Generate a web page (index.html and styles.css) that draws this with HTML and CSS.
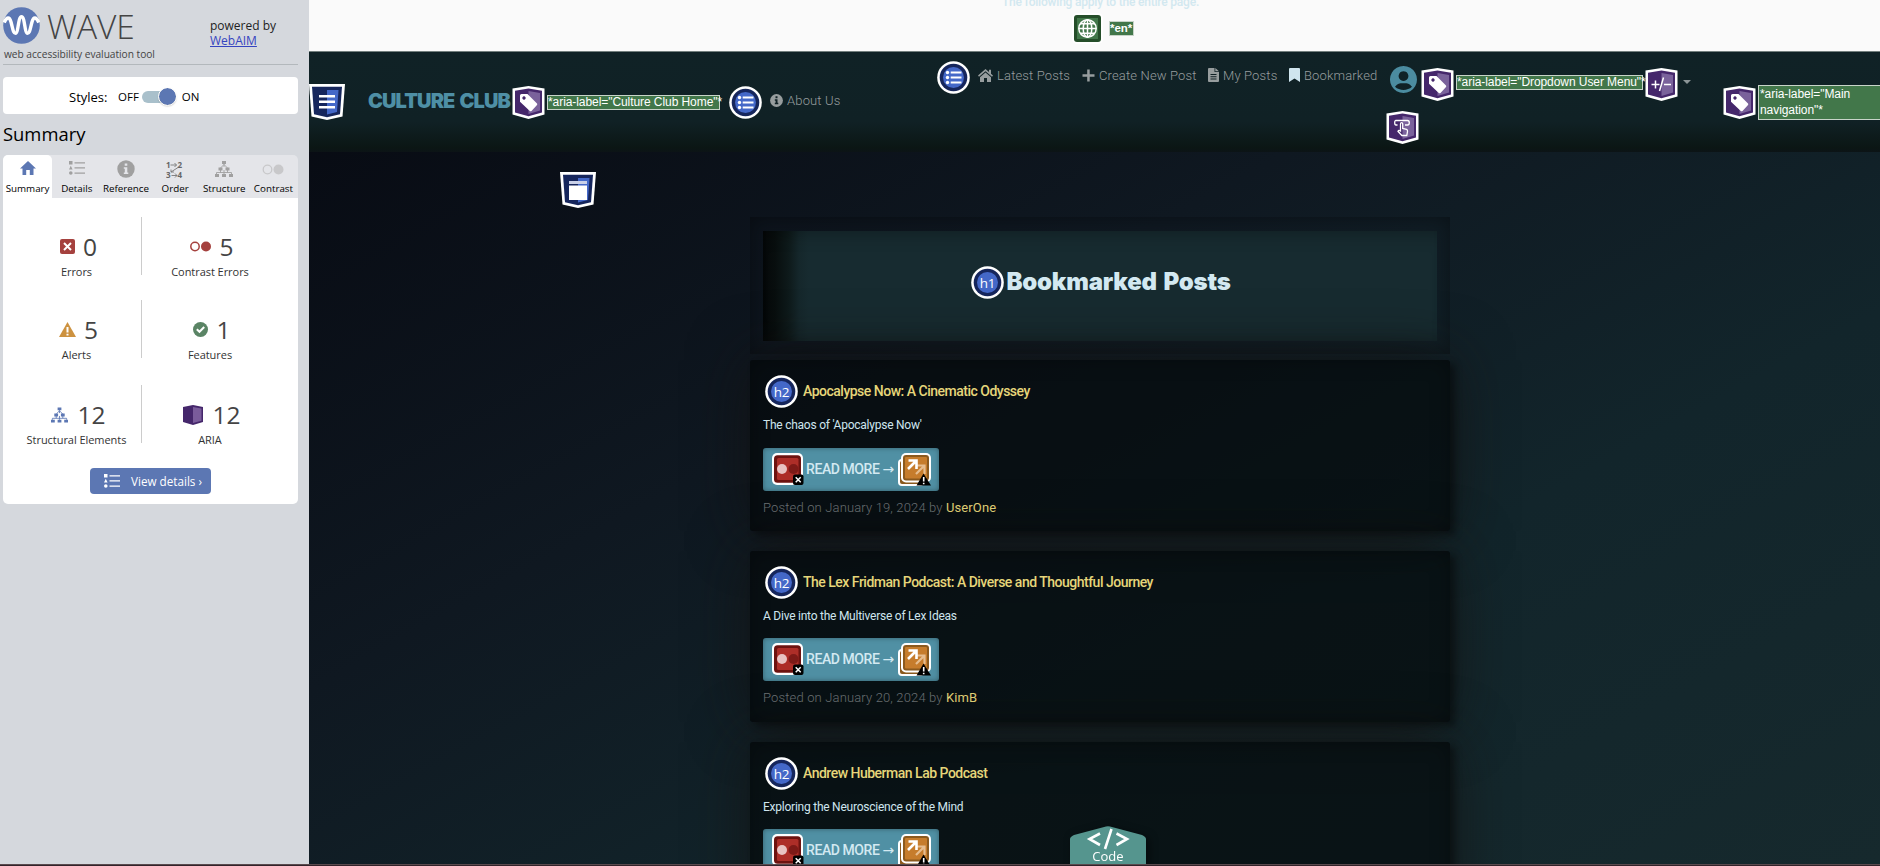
FILE: index.html
```html
<!DOCTYPE html>
<html lang="en">
<head>
<meta charset="utf-8">
<title>Culture Club - WAVE report</title>
<link rel="stylesheet" href="styles.css">
</head>
<body>
<svg class="defs" width="0" height="0" aria-hidden="true">
  <symbol id="hex" viewBox="0 0 33 33">
    <path d="M16.500 0 32.500 2.500V28.500L16.500 33 .5 28.500V2.500Z" fill="#fff"/>
    <path d="M16.500 2.500 30 4.700V26.500L16.500 30.300 3 26.500V4.700Z" fill="#45276b"/>
    <path d="M16.500 5 28 7V24.500L16.500 28Z" fill="#7a629b"/>
  </symbol>
  <symbol id="shield" viewBox="0 0 36 36">
    <path d="M0 0H36L33.500 32.500 18 36 2.500 32.500Z" fill="#fff"/>
    <path d="M3 2.700H33L31 30.300 18 33.300 5 30.300Z" fill="#16265c"/>
    <path d="M18 6H29.500L28 28 18 30.500Z" fill="#4468c8"/>
  </symbol>
  <symbol id="disc" viewBox="0 0 33 33">
    <circle cx="16.500" cy="16.500" r="16.300" fill="#fff"/>
    <circle cx="16.500" cy="16.500" r="13.800" fill="#16265c"/>
    <circle cx="16.500" cy="16.500" r="10.500" fill="#4468c8"/>
  </symbol>
  <symbol id="tag" viewBox="0 0 33 33">
    <use href="#hex"/>
    <path fill="#fff" fill-rule="evenodd" d="M8 9.500Q8 8 9.500 8H15.500L25 17.500Q25.600 18.300 25 19L19.500 25Q18.500 25.600 17.800 25L8 15.800ZM12 10.300a1.700 1.700 0 1 0 .01 0Z"/>
  </symbol>
  <symbol id="list" viewBox="0 0 33 33">
    <use href="#disc"/>
    <g fill="#fff"><circle cx="10.500" cy="11.500" r="1.700"/><circle cx="10.500" cy="16.500" r="1.700"/><circle cx="10.500" cy="21.500" r="1.700"/><path d="M13.700 10.400H24.500V12.500H13.700ZM13.700 15.400H24.500V17.500H13.700ZM13.700 20.400H24.500V22.500H13.700Z"/></g>
  </symbol>
  <symbol id="tree" viewBox="0 0 18 16">
    <path d="M9 3V6M5.500 7 9 3.500 12.500 7M5.500 9V11.500M12.500 9V11.500M1.500 13V11.500H16.500V13M9 9V13" fill="none" stroke="currentColor" stroke-width=".9"/>
    <path fill="currentColor" d="M7 0H11V3H7ZM3.500 6.500H7.500V9.500H3.500ZM10.500 6.500H14.500V9.500H10.500ZM0 13H4V16H0ZM7 13H11V16H7ZM14 13H18V16H14Z"/>
  </symbol>
  <symbol id="rows" viewBox="0 0 16 14">
    <path fill="currentColor" d="M0 0H3.500V3.500H0ZM5.500 1.200H16V2.400H5.500ZM1.800 4.800 3.600 8.500H0ZM5.500 6.300H16V7.500H5.500ZM5.500 11.600H16V12.800H5.500Z"/><circle cx="1.800" cy="12" r="1.800" fill="currentColor"/>
  </symbol>
  <symbol id="contrast-error" viewBox="0 0 32 33">
    <rect width="31" height="32" rx="5" fill="#fff"/><rect x="2" y="2.200" width="27" height="27.500" rx="3.500" fill="#6d1310"/>
    <rect x="5" y="5" width="21.500" height="22" rx="1.500" fill="#ad2e28"/>
    <circle cx="10" cy="16" r="5" fill="#e8c3c2"/><circle cx="21.500" cy="16" r="5" fill="#7d1a17"/>
    <rect x="21" y="21.500" width="10.500" height="10.500" rx="2" fill="#000"/><path d="M23.700 24.200 28.700 29.200M28.700 24.200 23.700 29.200" stroke="#fff" stroke-width="1.500"/>
  </symbol>
  <symbol id="redundant" viewBox="0 0 33 33">
    <rect x="0" y="6" width="26" height="27" rx="4" fill="#fff"/><rect x="2" y="8" width="23" height="23" rx="2" fill="#8c5a1e"/>
    <rect x="3" y="0" width="30" height="29.500" rx="5" fill="#fff"/><rect x="5" y="2" width="26" height="25.500" rx="3" fill="#8c5a1e"/>
    <rect x="7" y="4" width="22" height="21.500" rx="1" fill="#c67c2c"/>
    <path d="M18 21 26 13M18.500 12.500H26.500V21" fill="none" stroke="#e6bd90" stroke-width="2.200"/>
    <path d="M10 16 18 8M10.500 7.500H18.500V16" fill="none" stroke="#fff" stroke-width="2.600"/>
    <path d="M25.500 20.500 33 32.500H18.500Z" fill="#000"/><path d="M25.700 24V28.500M25.700 29.700V31.200" stroke="#fff" stroke-width="1.600"/>
  </symbol>
</svg>

<div class="app">
  <aside class="sidebar">
    <header class="brand">
      <div class="brand-logo">
        <div class="brand-line">
          <svg width="37" height="37" viewBox="0 0 37 37"><circle cx="18.500" cy="18.500" r="18.300" fill="#5c77b3"/><path d="M1.200 15.500C4 9.500 6.500 9.500 8 15C10 22.500 10.200 26.300 12.500 26.300C15.500 26.300 15 9.800 18.500 9.800C22 9.800 21.500 26.300 24.500 26.300C26.800 26.300 27 22.500 29 15C30.500 9.500 33 9.500 35.800 15.500" fill="none" stroke="#fff" stroke-width="3.400"/></svg>
          <span class="wordmark">WAVE</span>
        </div>
        <div class="tagline">web accessibility evaluation tool</div>
      </div>
      <div class="powered">powered by<br><a href="#">WebAIM</a></div>
    </header>
    <div class="styles-box"><span class="styles-label">Styles:</span><span>OFF</span><span class="toggle"><i></i></span><span>ON</span></div>
    <h2 class="side-title">Summary</h2>
    <nav class="tabs">
      <div class="tab active"><svg width="16" height="14" viewBox="0 0 16 14"><path fill="#5c77b3" d="M8 0 16 7.500H13.500V14H9.800V9H6.200V14H2.500V7.500H0Z"/></svg><span>Summary</span></div>
      <div class="tab"><svg width="16" height="14"><use href="#rows"/></svg><span>Details</span></div>
      <div class="tab"><svg width="18" height="18" viewBox="0 0 18 18"><circle cx="9" cy="9" r="8.700" fill="#a0a0a0"/><path fill="#e4e5e9" d="M7.700 3.500H10.300V5.800H7.700ZM6.800 7.300H10.300V12.500H11.300V14H6.800V12.500H7.800V8.700H6.800Z"/></svg><span>Reference</span></div>
      <div class="tab"><svg class="order" width="18" height="18" viewBox="0 0 18 18"><text x="0" y="7">1</text><text x="11.500" y="7">2</text><text x="0" y="17">3</text><text x="11.500" y="17">4</text><path d="M4.500 4H10.500M8.500 2 10.500 4 8.500 6M12 6.500 5 11M5 8.500V11H8M5.500 14.500H11M9 12.500 11 14.500 9 16.500" fill="none" stroke="#777" stroke-width=".9"/></svg><span>Order</span></div>
      <div class="tab"><svg width="18" height="16"><use href="#tree"/></svg><span>Structure</span></div>
      <div class="tab"><svg width="22" height="11" viewBox="0 0 22 11"><circle cx="5.500" cy="5.500" r="4.300" fill="none" stroke="#c8c8ca" stroke-width="1.300"/><circle cx="16.500" cy="5.500" r="5" fill="#c8c8ca"/></svg><span>Contrast</span></div>
    </nav>
    <section class="report">
      <div class="stats">
        <div class="stat"><div class="num"><svg width="15" height="15" viewBox="0 0 15 15"><rect width="15" height="15" rx="2" fill="#a5413e"/><path d="M4 4 11 11M11 4 4 11" stroke="#fff" stroke-width="2"/></svg><b>0</b></div><span>Errors</span></div>
        <div class="stat"><div class="num"><svg width="21" height="15" viewBox="0 0 21 15"><circle cx="5" cy="7.500" r="4.200" fill="none" stroke="#a5413e" stroke-width="1.500"/><circle cx="16" cy="7.500" r="5" fill="#a5413e"/></svg><b>5</b></div><span>Contrast Errors</span></div>
        <div class="stat"><div class="num"><svg width="17" height="15" viewBox="0 0 17 15"><path d="M8.500 0 17 15H0Z" fill="#cd9240"/><path d="M8.500 5V10.500M8.500 11.700V13.500" stroke="#fff" stroke-width="2"/></svg><b>5</b></div><span>Alerts</span></div>
        <div class="stat"><div class="num"><svg width="15" height="15" viewBox="0 0 15 15"><circle cx="7.500" cy="7.500" r="7.500" fill="#5a8465"/><path d="M3.800 7.200 6.500 9.800 11.200 5" fill="none" stroke="#fff" stroke-width="2"/></svg><b>1</b></div><span>Features</span></div>
        <div class="stat"><div class="num blue"><svg width="17" height="16"><use href="#tree"/></svg><b>12</b></div><span>Structural Elements</span></div>
        <div class="stat"><div class="num"><svg width="20" height="20" viewBox="0 0 20 20"><path d="M10 0 20 2V17L10 20 0 17V2Z" fill="#45276b"/><path d="M10 2 18.500 3.500V15.800L10 18Z" fill="#7a5c9b"/></svg><b>12</b></div><span>ARIA</span></div>
      </div>
      <button class="details"><svg width="16" height="14"><use href="#rows"/></svg><span>View details ›</span></button>
    </section>
  </aside>

  <div class="page">
    <div class="pagewide">
      <div class="notice">The following apply to the entire page.</div>
      <div class="lang"><svg width="31" height="31" viewBox="0 0 31 31"><rect width="31" height="31" rx="5" fill="#fff"/><rect x="2" y="2" width="27" height="27" rx="3" fill="#254e2a"/><rect x="5" y="5" width="21" height="21" fill="#42774a"/><g fill="none" stroke="#fff" stroke-width="1.500"><circle cx="15.500" cy="15.500" r="8.700"/><ellipse cx="15.500" cy="15.500" rx="4.300" ry="8.700"/><path d="M15.500 6.500V24.500M6.800 15.500H24.200M8.300 10.800H22.700M8.300 20.200H22.700"/></g></svg><span class="note">*en*</span></div>
    </div>

    <header class="navbar">
      <svg class="nav-mark" width="36" height="36" viewBox="0 0 36 36"><use href="#shield"/><path fill="#fff" d="M10 11H26V13.500H10ZM10 16.500H26V19H10ZM10 22H26V24.500H10Z"/></svg>
      <div class="logo">CULTURE CLUB</div>
      <svg class="logo-tag" width="33" height="33"><use href="#tag"/></svg>
      <span class="note home-note">*aria-label="Culture Club Home"*</span>
      <svg class="about-list" width="33" height="33"><use href="#list"/></svg>
      <a class="link about"><svg width="13" height="13" viewBox="0 0 13 13"><circle cx="6.500" cy="6.500" r="6.400" fill="currentColor"/><path fill="#102125" d="M5.500 2.300H7.500V4.300H5.500ZM4.800 5.300H7.500V8.800H8.300V10.300H4.800V8.800H5.600V6.700H4.800Z"/></svg>About Us</a>
      <div class="menu">
        <div class="menu-row">
          <svg class="menu-list" width="33" height="33"><use href="#list"/></svg>
          <a class="link l1"><svg width="15" height="13" viewBox="0 0 15 13"><path fill="currentColor" d="M7.500 0 15 6.500 14 7.700 7.500 2.200 1 7.700 0 6.500 2 4.800ZM11 .8H13V5L11 3.300ZM7.500 3.500 13 8.200V13H9V9H6V13H2V8.200Z"/></svg>Latest Posts</a>
          <a class="link l2"><svg width="13" height="13" viewBox="0 0 13 13"><path fill="currentColor" d="M5.200 .5H7.700V5.200H12.500V7.700H7.700V12.500H5.200V7.700H.5V5.200H5.200Z"/></svg>Create New Post</a>
          <a class="link l3"><svg width="11" height="14" viewBox="0 0 11 14"><path fill="currentColor" fill-rule="evenodd" d="M0 1Q0 0 1 0H6.500V4H11V13Q11 14 10 14H1Q0 14 0 13ZM7.300 0 11 3.300H7.300ZM2.500 6V7H8.500V6ZM2.500 8.200V9.200H8.500V8.200ZM2.500 10.500V11.500H8.500V10.500Z"/></svg>My Posts</a>
          <a class="link l4"><svg width="11" height="14" viewBox="0 0 11 14"><path fill="#cfe5ee" d="M0 1Q0 0 1 0H10Q11 0 11 1V14L5.500 10.500 0 14Z"/></svg>Bookmarked</a>
        </div>
      </div>
      <div class="user">
        <svg width="27" height="27" viewBox="0 0 27 27"><path fill="#4b8ca0" fill-rule="evenodd" d="M13.500 0A13.500 13.500 0 1 1 13.490 0ZM13.500 5.200A4.900 4.900 0 1 0 13.510 5.200ZM5 20.800C8 17 10 17.200 13.500 17.200S19 17 22 20.800C17.500 25 9.500 25 5 20.800Z"/></svg>
        <svg class="user-role" width="33" height="33" viewBox="0 0 33 33"><use href="#hex"/><path d="M11.500 14H10Q8.700 14 8.700 11.700T10 9.500H21.500Q23.300 9.500 23.300 11.700T21.500 14H19M14.500 20V13Q14.500 11.700 15.600 11.700T16.700 13V17.500L20.500 18.300Q21.800 18.800 21.500 20.500L20.800 24.500H15.800L12 20.300Q12.800 18.800 14.500 20Z" fill="none" stroke="#fff" stroke-width="1.300"/></svg>
      </div>
      <svg class="user-tag" width="33" height="33"><use href="#tag"/></svg>
      <span class="note user-note">*aria-label="Dropdown User Menu"*</span>
      <svg class="expand" width="33" height="33" viewBox="0 0 33 33"><use href="#hex"/><path d="M6.500 16.500H14.500M10.500 12.500V20.500M18.500 9.500 14.500 23M19 16.500H26" stroke="#fff" stroke-width="1.500"/></svg>
      <i class="caret"></i>
      <svg class="main-tag" width="33" height="33"><use href="#tag"/></svg>
      <span class="note main-note">*aria-label="Main navigation"*</span>
    </header>

    <main class="content">
      <svg class="main-mark" width="36" height="36" viewBox="0 0 36 36"><use href="#shield"/><path fill="#c9d0e8" d="M9 9H27V12H9Z"/><path fill="#fff" d="M9 13.500H27V28H9Z"/></svg>
      <section class="hero"><div class="hero-inner"><svg width="33" height="33" viewBox="0 0 33 33"><use href="#disc"/><text class="badge" x="16.500" y="22">h1</text></svg><h1>Bookmarked Posts</h1></div></section>

      <article class="post">
        <div class="post-head"><svg width="33" height="33" viewBox="0 0 33 33"><use href="#disc"/><text class="badge" x="16.500" y="22">h2</text></svg><h2>Apocalypse Now: A Cinematic Odyssey</h2></div>
        <p>The chaos of 'Apocalypse Now'</p>
        <a class="more"><svg width="32" height="33"><use href="#contrast-error"/></svg><span>READ MORE <em>→</em></span><svg width="33" height="33"><use href="#redundant"/></svg></a>
        <div class="meta">Posted on January 19, 2024 by <b>UserOne</b></div>
      </article>
      <article class="post">
        <div class="post-head"><svg width="33" height="33" viewBox="0 0 33 33"><use href="#disc"/><text class="badge" x="16.500" y="22">h2</text></svg><h2>The Lex Fridman Podcast: A Diverse and Thoughtful Journey</h2></div>
        <p>A Dive into the Multiverse of Lex Ideas</p>
        <a class="more"><svg width="32" height="33"><use href="#contrast-error"/></svg><span>READ MORE <em>→</em></span><svg width="33" height="33"><use href="#redundant"/></svg></a>
        <div class="meta">Posted on January 20, 2024 by <b>KimB</b></div>
      </article>
      <article class="post">
        <div class="post-head"><svg width="33" height="33" viewBox="0 0 33 33"><use href="#disc"/><text class="badge" x="16.500" y="22">h2</text></svg><h2>Andrew Huberman Lab Podcast</h2></div>
        <p>Exploring the Neuroscience of the Mind</p>
        <a class="more"><svg width="32" height="33"><use href="#contrast-error"/></svg><span>READ MORE <em>→</em></span><svg width="33" height="33"><use href="#redundant"/></svg></a>
      </article>
    </main>
    <div class="code-tab"><svg width="76" height="38" viewBox="0 0 76 38"><path d="M0 38V13Q0 11 4 9L36 .5Q38-.2 40 .5L72 9Q76 11 76 13V38Z" fill="#55958e"/><path d="M30 7.500 19.500 13 30 19M46.500 7.500 57 13 46.500 19M41.500 3 35 23" fill="none" stroke="#fff" stroke-width="2.600"/></svg><span>Code</span></div>
  </div>
</div>
<div class="edge"></div>
</body>
</html>
```
FILE: styles.css
```css
* { box-sizing: border-box; }
html, body { margin: 0; height: 866px; overflow: hidden; }
body { position: relative; background: #0d1117; font-family: Roboto, "Liberation Sans", sans-serif; }
svg { display: block; flex: none; }
.defs { position: absolute; }
.app { display: flex; height: 866px; }

/* WAVE panel */
.sidebar { width: 309px; flex: none; padding: 0 11px 0 3px; background: #d5d8dd; color: #000; font-family: "Open Sans", sans-serif; }
.brand { display: flex; height: 65px; border-bottom: 1px solid #b3b8bc; padding-top: 7px; }
.brand-logo { width: 207px; }
.brand-line { display: flex; height: 39px; gap: 7px; }
.wordmark { font-size: 33.500px; line-height: 39px; font-weight: 300; color: #444; letter-spacing: 0; }
.tagline { margin-left: 1px; font-size: 10.200px; line-height: 16px; color: #444; letter-spacing: -.03px; white-space: nowrap; }
.powered { font-size: 12px; line-height: 15px; padding-top: 11px; color: #222; }
.powered a { color: #3544c0; text-decoration: underline; }
.styles-box { display: flex; align-items: center; margin-top: 12px; height: 37px; background: #fff; border-radius: 4px; padding: 2px 0 0 66px; font-size: 11.500px; }
.styles-label { font-size: 13px; width: 49px; }
.toggle { width: 34px; height: 12px; margin: 0 6px 0 3px; border-radius: 6px; background: #a9c0cb; display: flex; align-items: center; justify-content: flex-end; }
.toggle i { width: 17px; height: 17px; border-radius: 50%; background: #5c77b3; box-shadow: 0 1px 2px rgba(0,0,0,.4); outline: 1px solid #fff; }
.side-title { margin: 7px 0 0; height: 34px; font-weight: 400; font-size: 18.400px; line-height: 25px; }
.tabs { display: flex; height: 43px; background: #e4e5e9; border-radius: 5px 5px 0 0; color: #a0a0a0; }
.tab { flex: 1 1 0; width: 0; height: 43px; display: flex; flex-direction: column; align-items: center; border-radius: 5px 5px 0 0; }
.tab svg { margin-top: 6px; }
.tab:nth-child(3) svg { margin-top: 5px; }
.tab:last-child svg { margin-top: 9px; }
.tab span { margin-top: auto; font-size: 9.800px; line-height: 19px; color: #000; white-space: nowrap; }
.active { background: #fff; }
.order text { font: 700 8px "Open Sans", sans-serif; fill: #666; }
.report { height: 306px; background: #fff; border-radius: 0 0 5px 5px; display: flex; flex-direction: column; align-items: center; }
.stats { width: 295px; height: 270px; padding: 19px 22px 0 7px; display: grid; grid-template-columns: 132px 134px; grid-template-rows: 83px 85px 83px; }
.stat { display: flex; flex-direction: column; align-items: center; height: 58px; padding: 12px 0 0 2px; color: #333; font-size: 11px; }
.stat:nth-child(odd) { border-right: 1px solid #ccc; }
.num { display: flex; align-items: center; gap: 8px; height: 35px; padding-left: 4px; }
.num b { font-size: 24.500px; font-weight: 400; line-height: 35px; color: #444; }
.stat:nth-child(n+5) .num { gap: 9px; }
.stat > span { line-height: 15px; white-space: nowrap; letter-spacing: -.05px; }
.blue { color: #5c77b3; }
.details { width: 121px; height: 26px; padding: 0 0 0 14px; border: 0; border-radius: 4px; background: #5c77b3; color: #fff; display: flex; gap: 11px; align-items: center; font: 11.700px "Open Sans", sans-serif; white-space: nowrap; }

/* Evaluated page */
.page { position: relative; width: 1571px; height: 864px; overflow: hidden; background: linear-gradient(to bottom right, #060810 0%, #0f1821 40%, #12252b 68%, #16292d 100%); }
.pagewide { height: 52px; overflow: hidden; background: #fafafa; border-bottom: 1px solid #737f7e; }
.notice { height: 14px; margin-top: -5px; padding-left: 693px; color: #d2e8f0; font-size: 12px; line-height: 14px; font-weight: 500; letter-spacing: -.2px; white-space: nowrap; }
.lang { display: flex; align-items: center; margin: 4px 0 0 763px; gap: 6px; }
.note { display: block; flex: none; border: 1px solid #c8d4c9; background: #42774a; color: #fff; font: 12px/13px "Liberation Sans", sans-serif; letter-spacing: -.07px; white-space: nowrap; }
.lang .note { width: 25px; font-weight: 700; font-size: 11.500px; }
.navbar { height: 100px; display: flex; align-items: flex-start; background: linear-gradient(#102226 0%, #102125 70%, #0b1614 96%, #0c1416 100%); }
.navbar > * { flex: none; }
.nav-mark { margin-top: 32px; }
.logo { width: 144px; margin: 37px 0 0 23px; font: 900 20px/25px Inter, sans-serif; letter-spacing: -.9px; word-spacing: 2px; color: #4e8fa5; white-space: nowrap; }
.logo-tag { margin-top: 34px; }
.home-note { width: 173px; margin: 43px 0 0 2px; }
.about-list { margin: 34px 0 0 9px; }
.link { display: flex; align-items: center; gap: 4px; height: 18px; color: #979d9e; font-size: 13px; font-weight: 300; letter-spacing: .15px; white-space: nowrap; }
.about { margin: 39px 0 0 8px; width: 85px; }
.menu { margin: 9px 0 0 82px; width: 453px; }
.menu-row { display: flex; }
.menu-row .link { margin-top: 5px; }
.l1 { width: 104px; margin-left: 8px; }
.l2 { width: 126px; }
.l3 { width: 81px; }
.l4 { width: 88px; }
.user { width: 33px; margin: 14px 0 0 -4px; }
.user > svg:first-child { margin-left: 4px; }
.user-role { margin-top: 18px; }
.user-tag { margin: 16px 0 0 2px; }
.user-note { width: 187px; margin: 23px 0 0 2px; }
.expand { margin: 16px 0 0 2px; }
.caret { margin: 28px 0 0 5px; border: 4px solid transparent; border-top-color: #8c9597; border-bottom: 0; }
.main-tag { margin: 34px 0 0 32px; }
.main-note { width: 124px; height: 35px; margin: 33px 0 0 2px; padding-left: 1px; white-space: normal; line-height: 16px; }

.content { display: flex; flex-direction: column; padding: 20px 0 0 441px; }
.main-mark { margin-left: -190px; }
.hero { width: 700px; height: 137px; margin-top: 9px; padding: 14px 13px; box-shadow: inset 0 0 20px rgba(0,0,0,.38); }
.hero-inner { height: 110px; display: flex; justify-content: center; align-items: center; gap: 2px; padding: 0 0 7px 2px; background: linear-gradient(90deg, #050809 0, #080e0e 12px, #0e1a1b 26px, #15272b 36px, #172b30 46px); box-shadow: inset 0 16px 18px -14px rgba(0,0,0,.3), inset 0 -16px 18px -16px rgba(0,0,0,.25); }
h1 { margin: -1px 0 0; font: 900 24px/30px Inter, sans-serif; color: #d3e9f1; letter-spacing: -.2px; word-spacing: 2px; white-space: nowrap; }
.badge { font: 13.500px "Open Sans", sans-serif; fill: #fff; text-anchor: middle; letter-spacing: -.3px; }
.post { width: 700px; height: 171px; flex: none; margin-top: 20px; padding: 15px 13px; border-radius: 3px; background: rgba(5,9,10,.66); box-shadow: inset 0 0 20px rgba(0,0,0,.33), 5px 4px 7px rgba(0,0,0,.4), 0 0 60px rgba(20,18,16,.75); }
.hero + .post { margin-top: 6px; }
.post-head { display: flex; align-items: center; height: 33px; padding-left: 2px; gap: 5px; }
.post h2 { margin: -2px 0 0; font: 500 14px/20px Roboto, sans-serif; color: #e6d67a; letter-spacing: -.5px; white-space: nowrap; }
.post p { margin: 9px 0 14px; height: 17px; font-size: 12px; line-height: 17px; letter-spacing: -.24px; color: #cfe5ee; white-space: nowrap; }
.post + .post p { margin-bottom: 13px; }
.more { display: flex; align-items: center; width: 176px; height: 43px; padding-left: 9px; border-radius: 3px; background: #5090a4; box-shadow: inset 0 0 5px rgba(0,0,0,.35); color: #d3e9f1; font-size: 14px; }
.more span { width: 94px; padding: 0 0 2px 2px; font-weight: 500; letter-spacing: -.42px; white-space: nowrap; }
.more em { font: 14px "DejaVu Sans", sans-serif; }
.meta { margin-top: 8px; font-size: 13px; line-height: 18px; font-weight: 300; letter-spacing: .15px; color: #6d7376; white-space: nowrap; }
.meta b { font-weight: 400; color: #e6d67a; letter-spacing: .1px; }
.code-tab { position: absolute; left: 761px; bottom: 0; width: 76px; height: 38px; filter: drop-shadow(3px 2px 4px rgba(0,0,0,.5)); }
.code-tab span { position: absolute; left: 0; right: 0; top: 21px; text-align: center; color: #fff; font: 13px/18px "Open Sans", sans-serif; }
.edge { position: absolute; left: 0; right: 0; top: 864px; height: 2px; background: #33232a; border-top: 1px solid #5a4a4e; }
```
